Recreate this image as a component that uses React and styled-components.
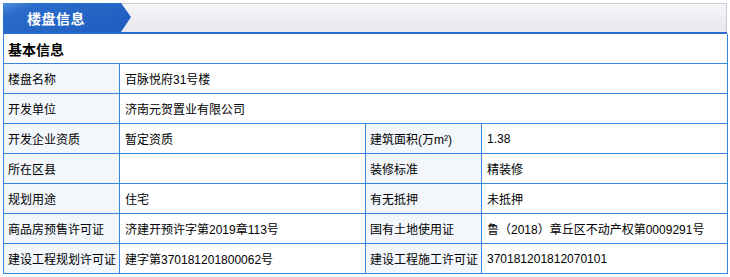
import styled, { createGlobalStyle } from 'styled-components'

const GlobalStyle = createGlobalStyle`
  body {
    margin: 0;
    background: #fff;
    font-family: "Liberation Sans", "Noto Sans CJK SC", sans-serif;
    font-size: 12px;
    color: #000;
  }
`

const Panel = styled.div`
  margin: 3px 0 0 3px;
  width: 724px;
`

const Header = styled.div`
  display: flex;
  height: 29px;
  background: linear-gradient(180deg, #f6f6f7 0%, #e7e8f0 100%);
  box-shadow: inset 0 1px 0 #c9cad8, inset -1px 0 0 #c9cad8;
  border-bottom: 2px solid #2a6ccb;
`

const Tab = styled.div`
  width: 128px;
  padding-left: 24px;
  box-sizing: border-box;
  display: flex;
  align-items: center;
  color: #fff;
  font-size: 14px;
  font-weight: bold;
  letter-spacing: 0.5px;
  background: linear-gradient(160deg, #4f8fdc 0%, #2a6cc9 18%, #1e5cc0 100%);
  clip-path: polygon(0 0, 118px 0, 128px 48%, 118px 100%, 0 100%);
`

const Table = styled.table`
  width: 724px;
  border-collapse: collapse;
  table-layout: fixed;
`

const Col = styled.col`
  width: ${p => (p.$label ? 116 : 246)}px;
`

const Cell = styled.td`
  height: 29px;
  padding: 0 0 0 ${p => (p.$label ? 4 : 5)}px;
  border: 1px solid #3586e0;
  background: ${p => (p.$label ? '#f3f7fc' : '#fff')};
  white-space: nowrap;
  vertical-align: middle;
`

const TitleCell = styled(Cell)`
  border-top: none;
  font-size: 14px;
  font-weight: bold;
  padding-left: 4px;
`

const rows = [
  [['楼盘名称', '百脉悦府31号楼']],
  [['开发单位', '济南元贺置业有限公司']],
  [['开发企业资质', '暂定资质'], ['建筑面积(万m²)', '1.38']],
  [['所在区县', ''], ['装修标准', '精装修']],
  [['规划用途', '住宅'], ['有无抵押', '未抵押']],
  [['商品房预售许可证', '济建开预许字第2019章113号'], ['国有土地使用证', '鲁（2018）章丘区不动产权第0009291号']],
  [['建设工程规划许可证', '建字第370181201800062号'], ['建设工程施工许可证', '370181201812070101']],
]

export default function App() {
  return (
    <Panel>
      <GlobalStyle />
      <Header>
        <Tab>楼盘信息</Tab>
      </Header>
      <Table>
        <colgroup>
          <Col $label />
          <Col />
          <Col $label />
          <Col />
        </colgroup>
        <tbody>
          <tr>
            <TitleCell colSpan={4}>基本信息</TitleCell>
          </tr>
          {rows.map((pairs, i) => (
            <tr key={i}>
              {pairs.map(([label, value], j) => [
                <Cell key={'l' + j} $label>{label}</Cell>,
                <Cell key={'v' + j} colSpan={pairs.length === 1 ? 3 : 1}>{value}</Cell>,
              ])}
            </tr>
          ))}
        </tbody>
      </Table>
    </Panel>
  )
}
